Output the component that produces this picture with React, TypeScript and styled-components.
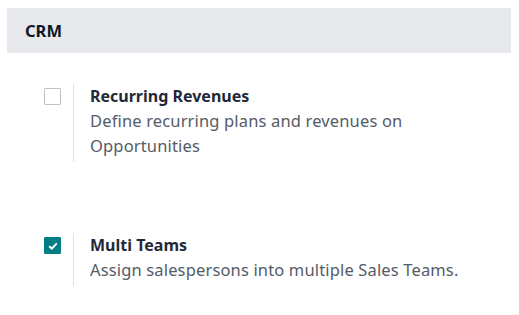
import React from "react";
import styled, { createGlobalStyle } from "styled-components";

const Global = createGlobalStyle`
  html, body { margin: 0; padding: 0; background: #ffffff; }
  body { font-family: "Noto Sans", "Open Sans", sans-serif; }
`;

const Page = styled.div`
  width: 519px;
  height: 315px;
  padding: 8px 8px 0 7px;
  box-sizing: border-box;
  background: #fff;
`;

const Header = styled.h2`
  margin: 0;
  height: 45px;
  display: flex;
  align-items: center;
  padding: 0 18px;
  background: #e7e9ed;
  font-size: 16.5px;
  font-weight: 700;
  color: #111827;
`;

const List = styled.div`
  display: flex;
  flex-direction: column;
  gap: 71px;
  padding: 31px 0 0 37px;
`;

const Setting = styled.div`
  display: flex;
  align-items: flex-start;
`;

const BoxCol = styled.div`
  width: 29px;
  padding-top: 4px;
  display: flex;
`;

const Box = styled.span<{ $checked?: boolean }>`
  width: 17px;
  height: 17px;
  box-sizing: border-box;
  border: 1px solid ${(p) => (p.$checked ? "#017e84" : "#bfc3c8")};
  background: ${(p) => (p.$checked ? "#017e84" : "#fff")};
  border-radius: 1px;
  display: flex;
  align-items: center;
  justify-content: center;
`;

const Body = styled.div`
  border-left: 1px solid #dee2e6;
  padding: 0 0 4px 16px;
  width: 400px;
`;

const Title = styled.div`
  font-size: 16px;
  font-weight: 700;
  line-height: 24px;
  color: #1f2937;
`;

const Desc = styled.div`
  font-size: 16.5px;
  letter-spacing: 0.15px;
  line-height: 25px;
  color: #545b66;
`;

function Check({ checked }: { checked?: boolean }) {
  return (
    <Box $checked={checked}>
      {checked && (
        <svg width="10" height="8" viewBox="0 0 10 8">
          <path d="M1.2 4.2 L3.8 6.6 L8.8 1.4" fill="none" stroke="#fff" strokeWidth="2" />
        </svg>
      )}
    </Box>
  );
}

export default function App() {
  return (
    <>
      <Global />
      <Page>
        <Header>CRM</Header>
        <List>
          <Setting>
            <BoxCol>
              <Check />
            </BoxCol>
            <Body>
              <Title>Recurring Revenues</Title>
              <Desc>Define recurring plans and revenues on Opportunities</Desc>
            </Body>
          </Setting>
          <Setting>
            <BoxCol>
              <Check checked />
            </BoxCol>
            <Body>
              <Title>Multi Teams</Title>
              <Desc>Assign salespersons into multiple Sales Teams.</Desc>
            </Body>
          </Setting>
        </List>
      </Page>
    </>
  );
}
